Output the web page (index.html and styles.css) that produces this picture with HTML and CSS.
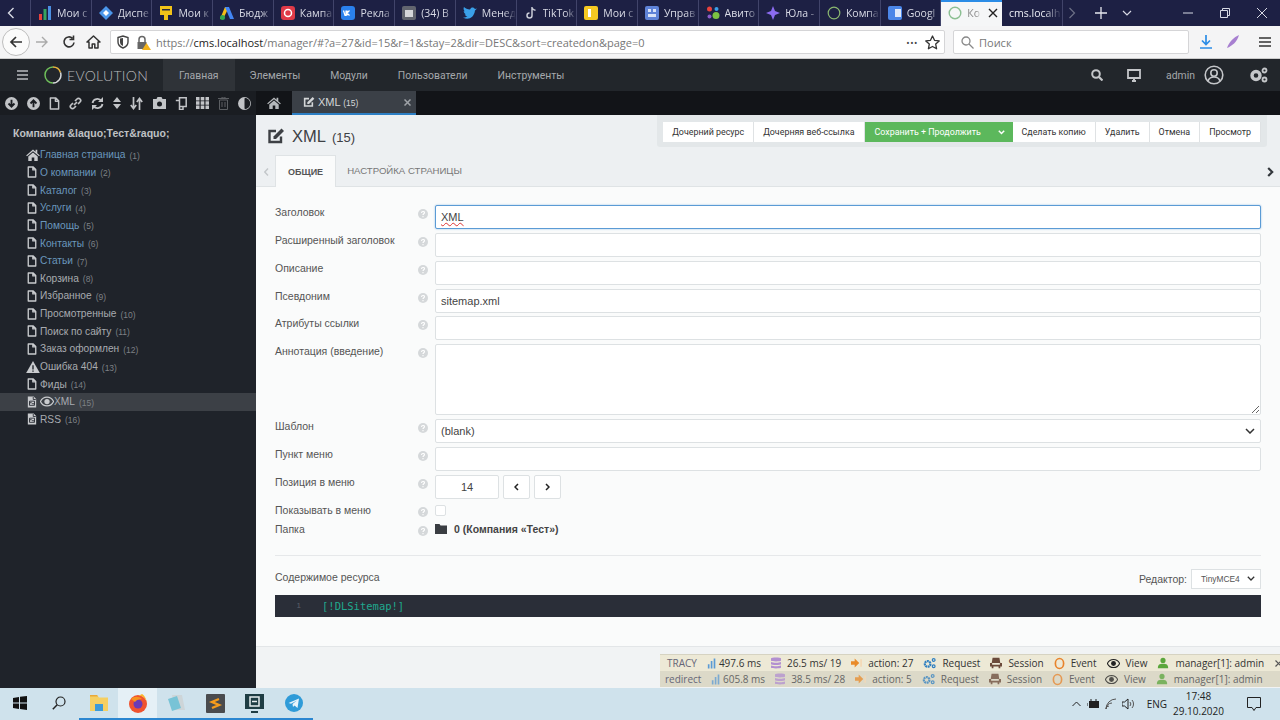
FILE: index.html
```html
<!DOCTYPE html>
<html lang="ru">
<head>
    <meta charset="UTF-8">
    <title>XML (15)</title>
    <link rel="stylesheet" href="styles.css">
</head>
<body>
    <svg class="defs" width="0" height="0">
        <symbol id="i-file" viewBox="0 0 12 14"><path d="M1.5 1h6l3 3v9h-9z M7 1.5v3h3.5" fill="none" stroke="currentColor" stroke-width="1.6" stroke-linejoin="round"/></symbol>
        <symbol id="i-xml" viewBox="0 0 12 14"><path d="M1 .5h7l3 3v10H1z" fill="currentColor"/><path d="M3 6h6v5H3z M3 8.5l2-1 2 2 2-1" fill="none" stroke="#1f232a" stroke-width="1"/><path d="M7.500 1v3h3" fill="none" stroke="#1f232a"/></symbol>
        <symbol id="i-home" viewBox="0 0 16 14"><path d="M8 .5 0 7.500l1 1L8 2.500l7 6 1-1-3-2.600V1h-2v2.200zM8 4 2.500 8.800V14H6.500v-4h3v4h4V8.800z" fill="currentColor"/></symbol>
        <symbol id="i-warn" viewBox="0 0 16 14"><path d="M8 0 16 14H0z" fill="currentColor"/><path d="M7.200 5h1.600v5H7.200zM7.200 11h1.600v1.500H7.200z" fill="#1f232a"/></symbol>
        <symbol id="i-eye" viewBox="0 0 16 12"><path d="M8 1C4.500 1 1.800 3.200.5 6 1.800 8.800 4.500 11 8 11s6.200-2.200 7.500-5C14.200 3.200 11.500 1 8 1z" fill="none" stroke="currentColor" stroke-width="1.300"/><circle cx="8" cy="6" r="3" fill="currentColor"/></symbol>
        <symbol id="i-help" viewBox="0 0 10 10"><circle cx="5" cy="5" r="5" fill="#d5d8da"/><path d="M3.500 4c0-2 3-2 3-.3 0 1.100-1.500 1.100-1.500 2.300M5 7v1.200" fill="none" stroke="#fff" stroke-width="1.100"/></symbol>
        <symbol id="i-edit" viewBox="0 0 18 18"><path d="M14 9.500V15H2.500V4H9" fill="none" stroke="currentColor" stroke-width="2.400"/><path d="M6.500 9.500 14.500 1.500l2.500 2.500-8 8H6.500z" fill="currentColor"/></symbol>
        <symbol id="i-bars" viewBox="0 0 12 12"><path d="M1 7h2v5H1zM4.500 3h2v9h-2zM8 0h2v12H8z" fill="#5b9bd5"/></symbol>
        <symbol id="i-db" viewBox="0 0 10 12"><path d="M0 1.500C0 .3 10 .3 10 1.500v2C10 4.700 0 4.700 0 3.500zM0 5c2 1 8 1 10 0v2.200C10 8.300 0 8.300 0 7.200zM0 8.500c2 1 8 1 10 0v2C10 11.700 0 11.700 0 10.500z" fill="#b28fd0"/></symbol>
        <symbol id="i-go" viewBox="0 0 12 12"><path d="M0 4h4V1l5 5-5 5V8H0z" fill="#e98b2a"/><path d="M10 2h2v8h-2z" fill="#f3d9b8"/></symbol>
        <symbol id="i-gears" viewBox="0 0 14 12"><circle cx="5" cy="7" r="3" fill="none" stroke="#2f7fc1" stroke-width="2.400" stroke-dasharray="2 .6"/><circle cx="11.500" cy="2.700" r="1.500" fill="none" stroke="#2f7fc1" stroke-width="1.300"/><circle cx="11.500" cy="9.500" r="1.500" fill="none" stroke="#2f7fc1" stroke-width="1.300"/></symbol>
        <symbol id="i-seat" viewBox="0 0 14 12"><path d="M3 0h8l1 6H2zM0 6h2.500v2h9V6H14v4H0zM2 10h2v2H2zM10 10h2v2h-2z" fill="#6b4a3a"/></symbol>
        <symbol id="i-ring" viewBox="0 0 12 14"><ellipse cx="6" cy="7" rx="4.500" ry="5.500" fill="none" stroke="#e8842c" stroke-width="1.800"/></symbol>
        <symbol id="i-user" viewBox="0 0 14 12"><circle cx="7" cy="3" r="3" fill="#5aa63c"/><path d="M1 12c0-4 2-5 6-5s6 1 6 5z" fill="#5aa63c"/></symbol>
        <symbol id="i-down" viewBox="0 0 14 14"><circle cx="7" cy="7" r="7" fill="currentColor"/><path d="M7 3v7M3.800 7 7 10.300 10.200 7" fill="none" stroke="#1a1d22" stroke-width="2"/></symbol>
        <symbol id="i-up" viewBox="0 0 14 14"><circle cx="7" cy="7" r="7" fill="currentColor"/><path d="M7 11V4M3.800 7 7 3.700 10.200 7" fill="none" stroke="#1a1d22" stroke-width="2"/></symbol>
    </svg>

    <div class="browser-tabs">
        <div class="tabs-back"><svg width="8" height="12" viewBox="0 0 8 12"><path d="M6.500 1 1.500 6l5 5" fill="none" stroke="#d7d9e4" stroke-width="1.400"/></svg></div>
        <div class="tab"><svg width="14" height="14" viewBox="0 0 14 14"><path d="M1 8h3v6H1z" fill="#e8413c"/><path d="M5.500 3h3v11h-3z" fill="#37a560"/><path d="M10 0h3v14h-3z" fill="#4b8fe2"/></svg><span>Мои с</span></div>
        <div class="tab"><svg width="14" height="14" viewBox="0 0 14 14"><path d="M7 0 14 7 7 14 0 7z" fill="#4b96ea"/><path d="M7 4 10 7 7 10 4 7z" fill="#fff"/></svg><span>Диспе</span></div>
        <div class="tab"><svg width="14" height="14" viewBox="0 0 14 14"><path d="M1 0h12v9H9v5H5V9H1z" fill="#f2c318"/><path d="M3 3h8v1.500H3z" fill="#2a2b3f"/></svg><span>Мои к</span></div>
        <div class="tab"><svg width="14" height="14" viewBox="0 0 14 14"><path d="M5 1h4l-3 6-3 6H0z" fill="#f5bc16"/><path d="M5 1h4l5 12h-4z" fill="#4285f4"/><circle cx="2.500" cy="11.500" r="2.500" fill="#34a853"/></svg><span>Бюдж</span></div>
        <div class="tab"><svg width="14" height="14" viewBox="0 0 14 14"><rect width="14" height="14" rx="3" fill="#e03a48"/><circle cx="7" cy="7" r="3.500" fill="none" stroke="#fff" stroke-width="1.500"/></svg><span>Кампа</span></div>
        <div class="tab"><svg width="14" height="14" viewBox="0 0 14 14"><rect width="14" height="14" rx="3" fill="#2a80ec"/><path d="M2.500 4.500 4 9.500h1V4.500M6 4.500v5M6 7l2.500-2.500M6 7l2.500 2.500" fill="none" stroke="#fff" stroke-width="1.200"/></svg><span>Рекла</span></div>
        <div class="tab"><svg width="14" height="14" viewBox="0 0 14 14"><rect width="14" height="14" rx="2" fill="#62656f"/><path d="M3 4h8v7H3z" fill="#d5d6da"/></svg><span>(34) В</span></div>
        <div class="tab"><svg width="14" height="14" viewBox="0 0 14 14"><path d="M0 11.500c5 3 11 .5 12-7l2-2-2 .5C11 1 8 .5 7 3.500 4.500 3.500 2.500 2.500 1 1c-1 2 0 3.500 1 4.500L.7 5c0 1.500 1 2.800 2.300 3.200L1.700 8.400C2.200 9.500 3.300 10.200 4.500 10.200 3.300 11.200 1.700 11.600 0 11.500z" fill="#3a9fe8"/></svg><span>Менед</span></div>
        <div class="tab"><svg width="14" height="14" viewBox="0 0 14 14"><path d="M8 1v8.500a2.500 2.500 0 1 1-2.500-2.500M8 1c.3 2 1.700 3.200 3.500 3.300" fill="none" stroke="#c9ccd6" stroke-width="1.500"/></svg><span>TikTok</span></div>
        <div class="tab"><svg width="14" height="14" viewBox="0 0 14 14"><rect width="14" height="14" rx="2" fill="#f6c922"/><path d="M4 3h3v8H4z" fill="#fff"/></svg><span>Мои с</span></div>
        <div class="tab"><svg width="14" height="14" viewBox="0 0 14 14"><rect width="14" height="14" rx="2" fill="#5f83d8"/><path d="M3 3h3v3H3zM8 3h3v3H8zM3 8h8v3H3z" fill="#d9e3f8"/></svg><span>Управ</span></div>
        <div class="tab"><svg width="14" height="14" viewBox="0 0 14 14"><circle cx="3.500" cy="3" r="2.500" fill="#e8413c"/><circle cx="10.500" cy="3" r="2" fill="#3a9fe8"/><circle cx="3.500" cy="10.500" r="2" fill="#8b5cc9"/><circle cx="10" cy="9.500" r="3.500" fill="#7cc242"/></svg><span>Авито</span></div>
        <div class="tab"><svg width="14" height="14" viewBox="0 0 14 14"><path d="M7 0 9 5 14 7 9 9 7 14 5 9 0 7 5 5z" fill="#8b6bf0"/></svg><span>Юла -</span></div>
        <div class="tab"><svg width="14" height="14" viewBox="0 0 14 14"><circle cx="7" cy="7" r="5.800" fill="none" stroke="#8bb870" stroke-width="1.200"/></svg><span>Компа</span></div>
        <div class="tab"><svg width="14" height="14" viewBox="0 0 14 14"><rect width="14" height="14" rx="2" fill="#4b86e8"/><path d="M7 3h6v8H7z" fill="#dfe9fb"/></svg><span>Googl</span></div>
        <div class="tab tab-active"><svg width="14" height="14" viewBox="0 0 14 14"><circle cx="7" cy="7" r="5.800" fill="none" stroke="#8bbf92" stroke-width="1.400"/></svg><span>Ко</span><svg class="tab-x" width="10" height="10" viewBox="0 0 10 10"><path d="M1 1l8 8M9 1l-8 8" stroke="#222" stroke-width="1.400"/></svg></div>
        <div class="tab tab-plain"><span>cms.localh</span></div>
        <div class="tabs-tools">
            <svg width="8" height="12" viewBox="0 0 8 12"><path d="M1.500 1l5 5-5 5" fill="none" stroke="#6d7086" stroke-width="1.200"/></svg>
            <svg class="tabs-plus" width="12" height="12" viewBox="0 0 12 12"><path d="M6 0v12M0 6h12" stroke="#e6e7ee" stroke-width="1.300"/></svg>
            <svg class="tabs-more" width="10" height="6" viewBox="0 0 10 6"><path d="M1 1l4 4 4-4" fill="none" stroke="#d7d9e4" stroke-width="1.200"/></svg>
        </div>
        <div class="win-buttons">
            <svg width="10" height="10" viewBox="0 0 10 10"><path d="M0 5h10" stroke="#d7d9e4"/></svg>
            <svg width="10" height="10" viewBox="0 0 10 10"><path d="M.5 2.500h7v7h-7zM2.500 2.500v-2h7v7h-2" fill="none" stroke="#d7d9e4"/></svg>
            <svg width="10" height="10" viewBox="0 0 10 10"><path d="M0 0l10 10M10 0L0 10" stroke="#d7d9e4"/></svg>
        </div>
    </div>

    <div class="browser-nav">
        <div class="nav-back"><svg width="14" height="14" viewBox="0 0 14 14"><path d="M13 7H2M7 2 2 7l5 5" fill="none" stroke="#333" stroke-width="1.700"/></svg></div>
        <svg class="nav-forward" width="14" height="14" viewBox="0 0 14 14"><path d="M1 7h11M7 2l5 5-5 5" fill="none" stroke="#aaa" stroke-width="1.400"/></svg>
        <svg class="nav-reload" width="14" height="14" viewBox="0 0 14 14"><path d="M12 7.500A5 5 0 1 1 10.500 3.300M11.500 .5v4h-4" fill="none" stroke="#333" stroke-width="1.600"/></svg>
        <svg class="nav-home" width="15" height="14" viewBox="0 0 15 14"><path d="M7.500 1 1 7h2v6h3.200V9h2.600v4H12V7h2z" fill="none" stroke="#333" stroke-width="1.500" stroke-linejoin="round"/></svg>
        <div class="urlbar">
            <svg class="url-shield" width="12" height="14" viewBox="0 0 12 14"><path d="M1 2.500 6 1l5 1.500V7c0 3-2.500 5-5 6-2.500-1-5-3-5-6z" fill="none" stroke="#444" stroke-width="1.400"/><path d="M6 3v8c-2-1-3-2-3-4V3.500z" fill="#444"/></svg>
            <svg class="url-lock" width="15" height="15" viewBox="0 0 15 15"><path d="M3 7V4.500a3 3 0 0 1 6 0V7" fill="none" stroke="#666" stroke-width="1.500"/><path d="M1.500 7h9v7h-9z" fill="#666"/><path d="M10.500 8 15 15H6z" fill="#f2b21c"/></svg>
            <span class="url-text">https://<b>cms.localhost</b>/manager/#?a=27&amp;id=15&amp;r=1&amp;stay=2&amp;dir=DESC&amp;sort=createdon&amp;page=0</span>
            <span class="url-dots">•••</span>
            <svg width="15" height="15" viewBox="0 0 15 15"><path d="M7.500 1l2 4.300 4.700.6-3.500 3.200.9 4.700-4.100-2.300-4.100 2.300.9-4.700L.8 5.900l4.700-.6z" fill="none" stroke="#333" stroke-width="1.300" stroke-linejoin="round"/></svg>
        </div>
        <div class="searchbar">
            <svg width="13" height="13" viewBox="0 0 13 13"><circle cx="5" cy="5" r="4" fill="none" stroke="#888" stroke-width="1.300"/><path d="M8 8l4.500 4.500" stroke="#888" stroke-width="1.300"/></svg>
            <span>Поиск</span>
        </div>
        <svg class="nav-dl" width="12" height="14" viewBox="0 0 12 14"><path d="M6 0v9M2 5.500 6 9.500l4-4M0 13h12" fill="none" stroke="#2b8ce6" stroke-width="1.700"/></svg>
        <svg class="nav-pen" width="14" height="14" viewBox="0 0 14 14"><path d="M13 0C8 2 3 7 1 13c5-2 10-6 12-13z" fill="#a77fd0"/></svg>
        <svg class="nav-menu" width="12" height="10" viewBox="0 0 12 10"><path d="M0 1h12M0 5h12M0 9h12" stroke="#333" stroke-width="1.300"/></svg>
    </div>

    <div class="app">
        <header class="app-head">
            <svg class="burger" width="11" height="10" viewBox="0 0 11 10"><path d="M0 1h11M0 5h11M0 9h11" stroke="#b9bcc0" stroke-width="1.500"/></svg>
            <svg class="logo-ring" width="18" height="18" viewBox="0 0 18 18"><path d="M9 1a8 8 0 0 1 7.500 5.500" fill="none" stroke="#e8b33c" stroke-width="1.500"/><path d="M16.500 6.500A8 8 0 0 1 9 17" fill="none" stroke="#d8dadc" stroke-width="1.500"/><path d="M9 17A8 8 0 0 1 9 1" fill="none" stroke="#6fbf5a" stroke-width="1.500"/></svg>
            <span class="logo-text">EVOLUTION</span>
            <nav class="main-menu">
                <a class="menu-active">Главная</a>
                <a>Элементы</a>
                <a>Модули</a>
                <a>Пользователи</a>
                <a>Инструменты</a>
            </nav>
            <div class="head-right">
                <svg width="12" height="12" viewBox="0 0 12 12"><circle cx="5" cy="5" r="3.800" fill="none" stroke="#c4c6c9" stroke-width="2"/><path d="M8 8l3.500 3.500" stroke="#c4c6c9" stroke-width="2.200"/></svg>
                <svg class="head-screen" width="14" height="13" viewBox="0 0 14 13"><path d="M1 1h12v8H1z" fill="none" stroke="#c4c6c9" stroke-width="1.800"/><path d="M5 12h4M7 9v3" stroke="#c4c6c9" stroke-width="2"/></svg>
                <span class="head-user">admin</span>
                <svg class="head-avatar" width="20" height="20" viewBox="0 0 20 20"><circle cx="10" cy="10" r="8.800" fill="none" stroke="#c4c6c9" stroke-width="1.600"/><circle cx="10" cy="8" r="3.200" fill="none" stroke="#c4c6c9" stroke-width="1.600"/><path d="M4 16c1-3 3-4 6-4s5 1 6 4" fill="none" stroke="#c4c6c9" stroke-width="1.600"/></svg>
                <svg class="head-gears" width="19" height="16" viewBox="0 0 19 16"><circle cx="7" cy="8.500" r="4" fill="none" stroke="#c4c6c9" stroke-width="3.400"/><circle cx="15.500" cy="3.500" r="2" fill="none" stroke="#c4c6c9" stroke-width="1.800"/><circle cx="15.500" cy="12.500" r="2" fill="none" stroke="#c4c6c9" stroke-width="1.800"/></svg>
            </div>
        </header>

        <div class="app-sub">
            <div class="tree-tools">
                <svg width="13" height="13"><use href="#i-down"/></svg>
                <svg width="13" height="13"><use href="#i-up"/></svg>
                <svg width="11" height="13"><use href="#i-file"/></svg>
                <svg width="13" height="13" viewBox="0 0 13 13"><path d="M5 8 8 5M4 6 2 8a2 2 0 0 0 3 3l2-2M9 7l2-2a2 2 0 0 0-3-3L6 4" fill="none" stroke="currentColor" stroke-width="1.700"/></svg>
                <svg width="13" height="13" viewBox="0 0 13 13"><path d="M1.500 6a5 5 0 0 1 9-2M11.500 7a5 5 0 0 1-9 2" fill="none" stroke="currentColor" stroke-width="1.800"/><path d="M12 0v5H7zM1 13V8h5z" fill="currentColor"/></svg>
                <svg width="8" height="12" viewBox="0 0 8 12"><path d="M4 0l4 5H0zM4 12 0 7h8z" fill="currentColor"/></svg>
                <svg width="13" height="13" viewBox="0 0 13 13"><path d="M3.500 0v11M.8 8l2.700 3.500L6.200 8M9.500 13V2M6.800 5l2.700-3.500L12.200 5" fill="none" stroke="currentColor" stroke-width="1.700"/></svg>
                <svg width="13" height="12" viewBox="0 0 13 12"><path d="M0 2h3.500L4.500 0h4l1 2H13v10H0z" fill="currentColor"/><circle cx="6.500" cy="7" r="2.500" fill="#1a1d22"/></svg>
                <svg width="12" height="13" viewBox="0 0 12 13"><path d="M4.500.8h6.700v8.700h-6.700zM.8 3.500h3.700v9H8v-3" fill="none" stroke="currentColor" stroke-width="1.500"/></svg>
                <svg width="13" height="12" viewBox="0 0 13 12"><path d="M0 0h3.500v3.500H0zM4.700 0h3.600v3.500H4.700zM9.500 0H13v3.500H9.500zM0 4.300h3.500v3.400H0zM4.700 4.300h3.600v3.400H4.700zM9.500 4.300H13v3.400H9.500zM0 8.500h3.500V12H0zM4.700 8.500h3.600V12H4.700zM9.500 8.500H13V12H9.500z" fill="currentColor"/></svg>
                <svg class="tool-off" width="11" height="13" viewBox="0 0 11 13"><path d="M1.500 3h8v9.500h-8zM0 1.500h11M4 1V0h3v1M4 5v5M7 5v5" fill="none" stroke="currentColor"/></svg>
                <svg width="13" height="13" viewBox="0 0 13 13"><circle cx="6.500" cy="6.500" r="5.700" fill="none" stroke="currentColor" stroke-width="1.500"/><path d="M6.500.8a5.700 5.700 0 0 1 0 11.400z" fill="#1a1d22"/><path d="M6.500.8a5.700 5.700 0 0 0 0 11.400z" fill="currentColor"/></svg>
            </div>
            <div class="work-tabs">
                <div class="work-home"><svg width="14" height="12"><use href="#i-home"/></svg></div>
                <div class="work-tab">
                    <svg width="12" height="12"><use href="#i-edit"/></svg>
                    <span>XML <small>(15)</small></span>
                    <svg class="work-x" width="7" height="7" viewBox="0 0 7 7"><path d="M.5.5l6 6M6.500.5l-6 6" stroke="#9fa3a8" stroke-width="1.500"/></svg>
                </div>
            </div>
        </div>

        <div class="app-body">
            <aside class="tree">
                <div class="tree-title">Компания &amp;laquo;Тест&amp;raquo;</div>
                <ul class="tree-list">
                    <li class="tree-link"><svg class="ic-wide" width="14" height="12"><use href="#i-home"/></svg><span>Главная страница</span> <small>(1)</small></li>
                    <li class="tree-link"><svg width="10" height="12"><use href="#i-file"/></svg><span>О компании</span> <small>(2)</small></li>
                    <li class="tree-link"><svg width="10" height="12"><use href="#i-file"/></svg><span>Каталог</span> <small>(3)</small></li>
                    <li class="tree-link"><svg width="10" height="12"><use href="#i-file"/></svg><span>Услуги</span> <small>(4)</small></li>
                    <li class="tree-link"><svg width="10" height="12"><use href="#i-file"/></svg><span>Помощь</span> <small>(5)</small></li>
                    <li class="tree-link"><svg width="10" height="12"><use href="#i-file"/></svg><span>Контакты</span> <small>(6)</small></li>
                    <li class="tree-link"><svg width="10" height="12"><use href="#i-file"/></svg><span>Статьи</span> <small>(7)</small></li>
                    <li><svg width="10" height="12"><use href="#i-file"/></svg><span>Корзина</span> <small>(8)</small></li>
                    <li><svg width="10" height="12"><use href="#i-file"/></svg><span>Избранное</span> <small>(9)</small></li>
                    <li><svg width="10" height="12"><use href="#i-file"/></svg><span>Просмотренные</span> <small>(10)</small></li>
                    <li><svg width="10" height="12"><use href="#i-file"/></svg><span>Поиск по сайту</span> <small>(11)</small></li>
                    <li><svg width="10" height="12"><use href="#i-file"/></svg><span>Заказ оформлен</span> <small>(12)</small></li>
                    <li><svg class="ic-wide" width="14" height="12"><use href="#i-warn"/></svg><span>Ошибка 404</span> <small>(13)</small></li>
                    <li><svg width="10" height="12"><use href="#i-file"/></svg><span>Фиды</span> <small>(14)</small></li>
                    <li class="tree-current"><svg width="10" height="12"><use href="#i-xml"/></svg><svg class="ic-eye" width="14" height="11"><use href="#i-eye"/></svg><span>XML</span> <small>(15)</small></li>
                    <li><svg width="10" height="12"><use href="#i-xml"/></svg><span>RSS</span> <small>(16)</small></li>
                </ul>
            </aside>

            <main class="main">
                <div class="title-row">
                    <h1 class="page-title"><svg width="18" height="18"><use href="#i-edit"/></svg>XML <small>(15)</small></h1>
                    <div class="actions">
                        <a class="btn">Дочерний ресурс</a>
                        <a class="btn">Дочерняя веб-ссылка</a>
                        <a class="btn btn-save"><span>Сохранить + Продолжить</span><svg width="7" height="5" viewBox="0 0 7 5"><path d="M.8.8 3.500 3.500 6.200.8" fill="none" stroke="#fff" stroke-width="1.500"/></svg></a>
                        <a class="btn">Сделать копию</a>
                        <a class="btn">Удалить</a>
                        <a class="btn">Отмена</a>
                        <a class="btn">Просмотр</a>
                    </div>
                </div>

                <div class="pane-tabs">
                    <svg class="pane-prev" width="5" height="8" viewBox="0 0 5 8"><path d="M4 .5.8 4 4 7.500" fill="none" stroke="#c3c7ca" stroke-width="1.400"/></svg>
                    <a class="pane-tab pane-tab-on">ОБЩИЕ</a>
                    <a class="pane-tab">НАСТРОЙКА СТРАНИЦЫ</a>
                    <svg class="pane-next" width="7" height="10" viewBox="0 0 7 10"><path d="M1.200 1 5.200 5l-4 4" fill="none" stroke="#33373c" stroke-width="2.200"/></svg>
                </div>

                <form class="form">
                    <div class="row"><label>Заголовок</label><svg class="help" width="10" height="10"><use href="#i-help"/></svg><div class="field field-focus" contenteditable="true"><span class="spell">XML</span></div></div>
                    <div class="row"><label>Расширенный заголовок</label><svg class="help" width="10" height="10"><use href="#i-help"/></svg><input class="field"></div>
                    <div class="row"><label>Описание</label><svg class="help" width="10" height="10"><use href="#i-help"/></svg><input class="field"></div>
                    <div class="row"><label>Псевдоним</label><svg class="help" width="10" height="10"><use href="#i-help"/></svg><input class="field" value="sitemap.xml"></div>
                    <div class="row"><label>Атрибуты ссылки</label><svg class="help" width="10" height="10"><use href="#i-help"/></svg><input class="field"></div>
                    <div class="row"><label>Аннотация (введение)</label><svg class="help" width="10" height="10"><use href="#i-help"/></svg><textarea class="field field-area"></textarea></div>
                    <div class="row"><label>Шаблон</label><svg class="help" width="10" height="10"><use href="#i-help"/></svg><div class="field field-select"><span>(blank)</span><svg width="10" height="6" viewBox="0 0 10 6"><path d="M1 1l4 4 4-4" fill="none" stroke="#333" stroke-width="1.500"/></svg></div></div>
                    <div class="row"><label>Пункт меню</label><svg class="help" width="10" height="10"><use href="#i-help"/></svg><input class="field"></div>
                    <div class="row"><label>Позиция в меню</label><svg class="help" width="10" height="10"><use href="#i-help"/></svg>
                        <div class="stepper">
                            <input class="field field-num" value="14">
                            <a class="step"><svg width="5" height="8" viewBox="0 0 5 8"><path d="M4 1 1 4l3 3" fill="none" stroke="#222" stroke-width="1.500"/></svg></a>
                            <a class="step"><svg width="5" height="8" viewBox="0 0 5 8"><path d="M1 1l3 3-3 3" fill="none" stroke="#222" stroke-width="1.500"/></svg></a>
                        </div>
                    </div>
                    <div class="row row-small"><label>Показывать в меню</label><svg class="help" width="10" height="10"><use href="#i-help"/></svg><span class="check"></span></div>
                    <div class="row row-small"><label>Папка</label><svg class="help" width="10" height="10"><use href="#i-help"/></svg>
                        <div class="parent"><svg width="12" height="10" viewBox="0 0 12 10"><path d="M0 0h4.500l1 1.500H12V10H0z" fill="#3a3d42"/></svg><b>0 (Компания «Тест»)</b></div>
                    </div>
                    <div class="divider"></div>
                    <div class="editor-head">
                        <label>Содержимое ресурса</label>
                        <div class="editor-pick">
                            <span>Редактор:</span>
                            <div class="editor-select"><span>TinyMCE4</span><svg width="8" height="5" viewBox="0 0 8 5"><path d="M.8.8 4 4 7.200.8" fill="none" stroke="#333" stroke-width="1.300"/></svg></div>
                        </div>
                    </div>
                    <div class="code"><span class="code-num">1</span><code>[!DLSitemap!]</code></div>
                </form>

                <div class="main-foot"></div>
            </main>
        </div>

        <div class="tracy">
            <div class="tracy-row">
                <span class="tracy-name">TRACY</span>
                <span class="tracy-time"><svg width="10" height="11"><use href="#i-bars"/></svg>497.6 ms</span>
                <span><svg width="10" height="12"><use href="#i-db"/></svg>26.5 ms/ 19</span>
                <span><svg width="11" height="12"><use href="#i-go"/></svg>action: 27</span>
                <span><svg width="13" height="12"><use href="#i-gears"/></svg>Request</span>
                <span><svg width="12" height="12"><use href="#i-seat"/></svg>Session</span>
                <span><svg width="11" height="13"><use href="#i-ring"/></svg>Event</span>
                <span><svg class="tracy-eye" width="13" height="11"><use href="#i-eye"/></svg>View</span>
                <span><svg width="12" height="12"><use href="#i-user"/></svg>manager[1]: admin</span>
                <svg class="tracy-x" width="7" height="7" viewBox="0 0 7 7"><path d="M.5.5l6 6M6.500.5l-6 6" stroke="#555" stroke-width="1.200"/></svg>
            </div>
            <div class="tracy-row tracy-row2">
                <span class="tracy-name">redirect</span>
                <span class="tracy-time"><svg width="10" height="11"><use href="#i-bars"/></svg>605.8 ms</span>
                <span><svg width="10" height="12"><use href="#i-db"/></svg>38.5 ms/ 28</span>
                <span><svg width="11" height="12"><use href="#i-go"/></svg>action: 5</span>
                <span><svg width="13" height="12"><use href="#i-gears"/></svg>Request</span>
                <span><svg width="12" height="12"><use href="#i-seat"/></svg>Session</span>
                <span><svg width="11" height="13"><use href="#i-ring"/></svg>Event</span>
                <span><svg class="tracy-eye" width="13" height="11"><use href="#i-eye"/></svg>View</span>
                <span><svg width="12" height="12"><use href="#i-user"/></svg>manager[1]: admin</span>
            </div>
        </div>
    </div>

    <footer class="taskbar">
        <div class="task-icon"><svg width="14" height="14" viewBox="0 0 14 14"><path d="M0 2 6 1v5.500H0zM7 .8 14 0v6.500H7zM0 7.500h6V13L0 12zM7 7.500h7V14l-7-.9z" fill="#111"/></svg></div>
        <div class="task-icon"><svg width="14" height="14" viewBox="0 0 14 14"><circle cx="8.500" cy="5.500" r="4.500" fill="none" stroke="#222" stroke-width="1.200"/><path d="M5.200 8.800.8 13.200" stroke="#222" stroke-width="1.500"/></svg></div>
        <div class="task-icon task-on"><svg width="18" height="16" viewBox="0 0 18 16"><path d="M0 0h7l2 2.500h9V16H0z" fill="#f5cf62"/><path d="M5 9h8v7H5z" fill="#3d9ad8"/><path d="M0 0h7l1 1.500H0z" fill="#e8a93a"/></svg></div>
        <div class="task-icon task-current task-on"><svg width="20" height="20" viewBox="0 0 20 20"><circle cx="10" cy="11" r="9" fill="#f0532f"/><path d="M10 2c5 1 9 4 9 9 0-5-3-9-5-10-1 1-3 1-4 1z" fill="#fbb52c"/><circle cx="10" cy="11" r="4.500" fill="#6a3bb5"/><path d="M3 6c3-3 8-3 11 0-3 0-6 1-7 3z" fill="#f7931e"/></svg></div>
        <div class="task-icon task-on"><svg width="19" height="18" viewBox="0 0 19 18"><path d="M5 1h10l3 15H8z" fill="#cdd5d8"/><path d="M1 5l9-3 4 12-9 3z" fill="#78c3d6"/></svg></div>
        <div class="task-icon task-on"><svg width="19" height="19" viewBox="0 0 19 19"><rect width="19" height="19" rx="1" fill="#4a4b4e"/><path d="M13 5 6 8l7 3-7 3" fill="none" stroke="#f59b1d" stroke-width="2.400"/></svg></div>
        <div class="task-icon task-on"><svg width="19" height="19" viewBox="0 0 19 19"><path d="M0 0h19v15H0z" fill="#1f3d44"/><path d="M6 17h7v2H6z" fill="#1f3d44"/><path d="M5 3h9v9H5zM7 7.500h5" fill="none" stroke="#e8eef0" stroke-width="1.500"/></svg></div>
        <div class="task-icon task-on"><svg width="18" height="18" viewBox="0 0 18 18"><circle cx="9" cy="9" r="9" fill="#2f9bd8"/><path d="M3.500 9 14 4.500 12.500 14 9.500 11.500 8 13l-.5-3L12 6.500 6 9.800z" fill="#e8f4fa"/></svg></div>
        <div class="tray">
            <svg width="9" height="6" viewBox="0 0 9 6"><path d="M.5 5 4.500 1l4 4" fill="none" stroke="#222"/></svg>
            <svg class="tray-power" width="13" height="10" viewBox="0 0 13 10"><path d="M2 2h10v7H2z" fill="#222"/><path d="M0 4v3M4 0v2M9 0v2" stroke="#222"/></svg>
            <svg width="12" height="12" viewBox="0 0 12 12"><path d="M1 11a10 10 0 0 1 10-10M1 11a6 6 0 0 1 6-6M1 11a3 3 0 0 1 3-3" fill="none" stroke="#555"/></svg>
            <svg width="12" height="12" viewBox="0 0 12 12"><path d="M0 4h2.500L6 1v10L2.500 8H0z" fill="none" stroke="#222"/><path d="M8 4a3 3 0 0 1 0 4M10 2a6 6 0 0 1 0 8" fill="none" stroke="#555"/></svg>
            <span class="tray-lang">ENG</span>
            <div class="tray-clock"><span>17:48</span><span>29.10.2020</span></div>
            <svg class="tray-note" width="14" height="14" viewBox="0 0 14 14"><path d="M.5.500h13v10H9l-2 3-2-3H.5z" fill="none" stroke="#222"/></svg>
        </div>
    </footer>
</body>
</html>
```
FILE: styles.css
```css
* {
    box-sizing: border-box;
}

html, body {
    margin: 0;
    padding: 0;
    height: 720px;
    overflow: hidden;
}

body {
    display: flex;
    flex-direction: column;
    font-family: 'Liberation Sans', Arial, sans-serif;
    font-size: 10.5px;
    color: #555;
    background-color: #fff;
}

svg {
    display: block;
    flex: none;
}

.defs {
    position: absolute;
}

/* Firefox: tabs */
.browser-tabs {
    display: flex;
    align-items: stretch;
    height: 26px;
    background-color: #1d2044;
    color: #d9dbe6;
    font-family: 'Open Sans', sans-serif;
    font-size: 10.5px;
}

.tabs-back {
    width: 31px;
    display: flex;
    align-items: center;
    padding-left: 7px;
    border-right: 1px solid #41446a;
}

.tab {
    width: 60.7px;
    display: flex;
    align-items: center;
    gap: 5px;
    padding-left: 7px;
    border-right: 1px solid #41446a;
    overflow: hidden;
}

.tab span {
    white-space: nowrap;
    width: 34px;
    flex: none;
    -webkit-mask-image: linear-gradient(to right, #000 65%, transparent);
    mask-image: linear-gradient(to right, #000 65%, transparent);
}

.tab-active {
    background-color: #f5f6f7;
    color: #888;
    border-top: 2px solid #2b8ce6;
    border-right: 0;
    padding-bottom: 2px;
}

.tab-active span {
    width: 14px;
}

.tab-x {
    margin-left: 2px;
}

.tab-plain span {
    width: 53px;
    color: #eceef5;
}

.tabs-tools {
    display: flex;
    align-items: center;
    margin-left: 5px;
}

.tabs-plus {
    margin-left: 19px;
}

.tabs-more {
    margin-left: 15px;
}

.win-buttons {
    display: flex;
    align-items: center;
    gap: 27px;
    margin-left: auto;
    padding-right: 13px;
}

/* Firefox: address bar */
.browser-nav {
    display: flex;
    align-items: center;
    height: 33px;
    background-color: #f4f4f5;
    border-bottom: 1px solid #ccc;
    padding-left: 2px;
}

.nav-back {
    width: 28px;
    height: 28px;
    border: 1px solid #bdbdbd;
    border-radius: 50%;
    background-color: #fbfbfb;
    display: flex;
    align-items: center;
    justify-content: center;
}

.nav-forward {
    margin-left: 5px;
}

.nav-reload {
    margin-left: 13px;
}

.nav-home {
    margin-left: 10px;
}

.urlbar {
    display: flex;
    align-items: center;
    width: 835px;
    height: 24px;
    margin-left: 9px;
    padding: 0 4px 0 6px;
    background-color: #fff;
    border: 1px solid #d5d5d7;
    border-radius: 2px;
    font-family: 'Open Sans', sans-serif;
    font-size: 11px;
    color: #777;
}

.url-lock {
    margin-left: 7px;
    margin-right: 5px;
}

.url-text b {
    font-weight: 400;
    color: #222;
}

.url-dots {
    margin-left: auto;
    margin-right: 7px;
    font-size: 9px;
    color: #444;
    letter-spacing: .5px;
}

.searchbar {
    display: flex;
    align-items: center;
    gap: 5px;
    width: 236px;
    height: 24px;
    margin-left: 8px;
    padding-left: 7px;
    background-color: #fff;
    border: 1px solid #d5d5d7;
    border-radius: 2px;
    font-family: 'Open Sans', sans-serif;
    font-size: 11px;
    color: #777;
}

.nav-dl {
    margin-left: 11px;
}

.nav-pen {
    margin-left: 14px;
}

.nav-menu {
    margin-left: 19px;
}

/* CMS */
.app {
    position: relative;
    flex: 1;
    display: flex;
    flex-direction: column;
    min-height: 0;
}

.app-head {
    display: flex;
    align-items: center;
    height: 32px;
    background-color: #22262b;
    padding-left: 17px;
    font-family: Roboto, sans-serif;
    font-size: 10.4px;
    color: #a5a8ac;
}

.logo-ring {
    margin-left: 16px;
}

.logo-text {
    margin-left: 5px;
    width: 96px;
    font-family: Lato, sans-serif;
    font-weight: 300;
    font-size: 14px;
    letter-spacing: .3px;
    color: #b9bcbf;
}

.main-menu {
    display: flex;
    align-self: stretch;
}

.main-menu a {
    display: flex;
    align-items: center;
    padding: 0 15px;
}

.main-menu .menu-active {
    background-color: #2f3338;
    padding: 0 16px;
}

.head-right {
    display: flex;
    align-items: center;
    margin-left: auto;
}

.head-screen {
    margin-left: 24px;
}

.head-user {
    margin-left: 25px;
}

.head-avatar {
    margin-left: 9px;
}

.head-gears {
    margin-left: 25px;
    margin-right: 12px;
}

.app-sub {
    display: flex;
    height: 24px;
    background-color: #121418;
}

.tree-tools {
    width: 256px;
    display: flex;
    align-items: center;
    justify-content: space-between;
    padding: 0 5px;
    background-color: #1a1d22;
    color: #c2c4c7;
}

.tool-off {
    color: #5c5f63;
}

.work-tabs {
    display: flex;
}

.work-home {
    width: 36px;
    display: flex;
    align-items: center;
    justify-content: center;
    color: #b5b8bb;
}

.work-tab {
    width: 124px;
    display: flex;
    align-items: center;
    gap: 3px;
    padding-left: 11px;
    padding-right: 5px;
    background-color: #3b4047;
    border-bottom: 2px solid #2d7fc4;
    color: #d4d6d8;
    font-size: 11px;
}

.work-tab small {
    font-size: 8.500px;
}

.work-x {
    margin-left: auto;
}

.app-body {
    flex: 1;
    display: flex;
    min-height: 0;
}

/* document tree */
.tree {
    width: 256px;
    flex: none;
    background-color: #1f232a;
    color: #a8abb0;
    padding-top: 12px;
    font-size: 10.2px;
}

.tree-title {
    padding-left: 13px;
    font-weight: 700;
    font-size: 10.5px;
    color: #bfc1c4;
    line-height: 13px;
    margin-bottom: 6px;
}

.tree-list {
    list-style: none;
    margin: 0;
    padding: 0;
}

.tree-list li {
    display: flex;
    align-items: center;
    height: 17.65px;
    padding-left: 27px;
    white-space: pre;
}

.tree-list li svg {
    margin-right: 3px;
    color: #c9cbce;
}

.tree-list small {
    font-size: 8.500px;
    color: #7d8085;
    margin-left: 4px;
    padding-top: 2px;
}

.tree-list .ic-wide {
    margin-left: -1px;
    margin-right: 0;
}

.tree-list .ic-eye {
    margin-left: 0;
    margin-right: 0;
}

.tree-link span {
    color: #6a97bd;
}

.tree-current {
    background-color: #3c4046;
}

/* content */
.main {
    flex: 1;
    display: flex;
    flex-direction: column;
    min-width: 0;
    background-color: #fafbfb;
}

.title-row {
    display: flex;
    justify-content: space-between;
    height: 40px;
    padding: 0 13px 0 11px;
    background-color: #edf0f2;
}

.page-title {
    display: flex;
    align-items: center;
    gap: 7px;
    margin: 2px 0 0;
    height: 38px;
    font-size: 16.5px;
    font-weight: 400;
    color: #3d4044;
}

.page-title small {
    font-size: 13px;
    margin-left: -1px;
    padding-top: 2px;
}

.actions {
    display: flex;
    align-self: flex-start;
    height: 32px;
    padding: 7px 6px 5px;
    background-color: #e3e7e9;
    border-radius: 0 0 3px 3px;
    font-family: Roboto, sans-serif;
    font-size: 8.900px;
}

.btn {
    display: flex;
    align-items: center;
    justify-content: center;
    padding: 0 9px;
    background-color: #fff;
    border-right: 1px solid #dfe2e4;
    color: #333;
    white-space: nowrap;
}

.btn-save {
    justify-content: space-between;
    width: 148px;
    padding: 0 8px 0 10px;
    background-color: #5cb85c;
    border: 0;
    color: #fff;
}

.pane-tabs {
    position: relative;
    display: flex;
    align-items: stretch;
    height: 32px;
    background-color: #edf0f2;
    border-bottom: 1px solid #dfe3e5;
    padding-left: 19px;
    font-size: 9.600px;
    color: #777;
}

.pane-prev {
    position: absolute;
    left: 8px;
    top: 13px;
}

.pane-next {
    position: absolute;
    right: 6px;
    top: 12px;
}

.pane-tab {
    display: flex;
    align-items: center;
    padding: 0 11px;
}

.pane-tab-on {
    padding: 0 12px;
    background-color: #fafbfb;
    border: 1px solid #dfe3e5;
    border-bottom: 0;
    margin-bottom: -1px;
    font-size: 9px;
    font-weight: 700;
    color: #555;
}

.form {
    flex: 1;
    padding: 18px 19px 0;
}

.row {
    display: flex;
    margin-bottom: 3.850px;
}

.row label {
    width: 143px;
    line-height: 14px;
    flex: none;
}

.help {
    margin: 4px 7px 0 0;
}

.field {
    flex: 1;
    display: block;
    min-width: 0;
    height: 24px;
    padding: 0 5px;
    background-color: #fff;
    border: 1px solid #dde1e3;
    border-radius: 2px;
    font-family: 'Liberation Sans', Arial, sans-serif;
    font-size: 11px;
    color: #444;
    outline: none;
}

.field-focus {
    display: flex;
    align-items: center;
    border-color: #5b9bd5;
    box-shadow: 0 0 2px #8fbbe3;
}

.spell {
    text-decoration: underline wavy #d33;
    text-decoration-thickness: 1px;
}

.field-area {
    height: 71px;
    resize: vertical;
}

.field-select {
    display: flex;
    align-items: center;
    justify-content: space-between;
}

.stepper {
    display: flex;
    gap: 4px;
}

.field-num {
    flex: none;
    width: 64px;
    text-align: center;
}

.step {
    width: 27px;
    height: 24px;
    display: flex;
    align-items: center;
    justify-content: center;
    background-color: #fff;
    border: 1px solid #dde1e3;
    border-radius: 2px;
}

.row-small {
    height: 15.500px;
    margin-bottom: 4px;
}

.check {
    width: 11px;
    height: 11px;
    margin-top: 2px;
    background-color: #fff;
    border: 1px solid #dde1e3;
    border-radius: 2px;
}

.parent {
    display: flex;
    align-items: center;
    gap: 7px;
    height: 14px;
    color: #444;
}

.divider {
    margin-top: 17px;
    margin-bottom: 13px;
    border-top: 1px solid #e6e8ea;
}

.editor-head {
    display: flex;
    align-items: center;
    justify-content: space-between;
    height: 20px;
    margin-bottom: 6px;
}

.editor-head label {
    padding-bottom: 4px;
}

.editor-pick {
    display: flex;
    align-items: center;
    gap: 4px;
}

.editor-select {
    display: flex;
    align-items: center;
    justify-content: space-between;
    width: 70px;
    height: 20px;
    padding: 0 5px 0 9px;
    background-color: #fff;
    border: 1px solid #dde1e3;
    font-size: 8.400px;
}

.code {
    display: flex;
    align-items: center;
    height: 22px;
    background-color: #2a2e38;
}

.code-num {
    width: 47px;
    padding-right: 21px;
    text-align: right;
    font-size: 8px;
    color: #5d616a;
}

.code code {
    font-family: 'DejaVu Sans Mono', monospace;
    font-size: 10.500px;
    color: #20a98e;
}

.main-foot {
    height: 42px;
    background-color: #f1f3f4;
    border-top: 1px solid #e3e6e8;
}

/* debug bar, floats over the page corner */
.tracy {
    position: absolute;
    right: 0;
    bottom: 1px;
    width: 620px;
    height: 33px;
    background-color: #ede9d6;
    border-top: 1px solid #d6d3c2;
    font-family: 'Open Sans', sans-serif;
    font-size: 10px;
    color: #333;
}

.tracy-row {
    display: flex;
    align-items: center;
    gap: 10px;
    height: 16px;
    padding-left: 7px;
    white-space: nowrap;
}

.tracy-row span {
    display: flex;
    align-items: center;
    gap: 6px;
}

.tracy-row .tracy-name {
    width: 34px;
    color: #667;
}

.tracy-row .tracy-time {
    gap: 2px;
}

.tracy-row2 {
    background-color: #dcd9c8;
    padding-left: 5px;
    color: #666;
}

.tracy-row2 .tracy-name {
    width: 36px;
}

.tracy-row2 svg {
    opacity: .75;
}

.tracy-eye {
    color: #222;
}

.tracy-x {
    margin-left: 1px;
}

/* Windows taskbar */
.taskbar {
    display: flex;
    align-items: stretch;
    height: 32px;
    background-color: #cfe2ec;
    color: #222;
    font-family: 'Open Sans', sans-serif;
    font-size: 10px;
}

.task-icon {
    width: 39px;
    display: flex;
    align-items: center;
    justify-content: center;
    border-bottom: 2px solid transparent;
}

.task-on {
    border-bottom-color: #2b86d0;
    margin-left: 1px;
    margin-right: -1px;
}

.task-current {
    background-color: #e5f0f6;
}

.tray {
    display: flex;
    align-items: center;
    margin-left: auto;
    gap: 5px;
}

.tray-power {
    margin-left: 1px;
}

.tray-lang {
    margin-left: 8px;
    margin-right: 1px;
}

.tray-clock {
    display: flex;
    flex-direction: column;
    align-items: center;
    line-height: 15px;
}

.tray-note {
    margin-left: 18px;
    margin-right: 19px;
}
```
